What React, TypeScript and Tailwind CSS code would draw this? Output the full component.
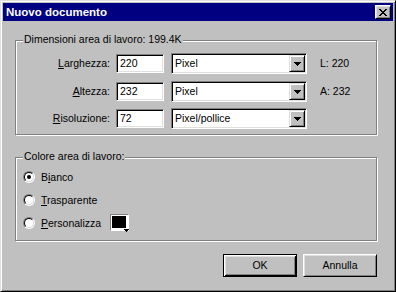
import React from 'react';

// Win98 style bevels
const sunken =
  'border border-t-[#808080] border-l-[#808080] border-b-white border-r-white shadow-[inset_1px_1px_#000,inset_-1px_-1px_#dfdfdf]';
const raised =
  'bg-[#c0c0c0] border border-t-white border-l-white border-b-black border-r-black shadow-[inset_1px_1px_#dfdfdf,inset_-1px_-1px_#808080]';
const comboBtn =
  'bg-[#c0c0c0] border border-t-[#dfdfdf] border-l-[#dfdfdf] border-b-black border-r-black shadow-[inset_1px_1px_#fff,inset_-1px_-1px_#808080]';
const etched = 'relative border border-[#808080] shadow-[inset_1px_1px_#fff,1px_1px_#fff]';

function DownArrow() {
  return (
    <svg width="7" height="4" viewBox="0 0 7 4" shapeRendering="crispEdges" fill="#000">
      <rect x="0" y="0" width="7" height="1" />
      <rect x="1" y="1" width="5" height="1" />
      <rect x="2" y="2" width="3" height="1" />
      <rect x="3" y="3" width="1" height="1" />
    </svg>
  );
}

function CloseX() {
  return (
    <svg width="8" height="7" viewBox="0 0 8 7" shapeRendering="crispEdges" fill="#000">
      <rect x="0" y="0" width="2" height="1" />
      <rect x="6" y="0" width="2" height="1" />
      <rect x="1" y="1" width="2" height="1" />
      <rect x="5" y="1" width="2" height="1" />
      <rect x="2" y="2" width="4" height="1" />
      <rect x="3" y="3" width="2" height="1" />
      <rect x="2" y="4" width="4" height="1" />
      <rect x="1" y="5" width="2" height="1" />
      <rect x="5" y="5" width="2" height="1" />
      <rect x="0" y="6" width="2" height="1" />
      <rect x="6" y="6" width="2" height="1" />
    </svg>
  );
}

const rows = [
  { hot: 'L', rest: 'arghezza:', value: '220', unit: 'Pixel', info: 'L: 220', mt: '' },
  { hot: 'A', rest: 'ltezza:', value: '232', unit: 'Pixel', info: 'A: 232', mt: 'mt-[7px]' },
  { hot: 'R', rest: 'isoluzione:', value: '72', unit: 'Pixel/pollice', info: '', mt: 'mt-[6px]' },
];

function Radio({ checked }: { checked?: boolean }) {
  return (
    <div className="self-start mt-[5px] w-[12px] h-[12px] rounded-full border border-t-[#808080] border-l-[#808080] border-b-white border-r-white">
      <div className="w-[10px] h-[10px] rounded-full border border-t-black border-l-black border-b-[#dfdfdf] border-r-[#dfdfdf] bg-white flex items-center justify-center">
        {checked && <div className="w-[4px] h-[4px] rounded-full bg-black" />}
      </div>
    </div>
  );
}

export default function App() {
  return (
    <div className="w-[396px] h-[292px] bg-[#c0c0c0] border border-t-[#dfdfdf] border-l-[#dfdfdf] border-b-black border-r-black shadow-[inset_1px_1px_#fff,inset_-1px_-1px_#808080] p-[2px] flex flex-col font-['Liberation_Sans',Arial,sans-serif] text-[10.5px] text-black leading-[13px]">
      {/* Title bar */}
      <div className="h-[18px] bg-[#000080] flex items-center justify-between pl-[3px] pr-[2px]">
        <span className="text-white font-bold text-[11.5px]">Nuovo documento</span>
        <div className={`${raised} w-[16px] h-[14px] flex items-center justify-center`}>
          <CloseX />
        </div>
      </div>

      {/* Body */}
      <div className="flex flex-col pl-[12px]">
        <div className={`${etched} mt-[19px] w-[362px] h-[95px] pt-[12px]`}>
          <span className="absolute top-[-8px] left-[7px] px-[1px] bg-[#c0c0c0]">
            Dimensioni area di lavoro: 199.4K
          </span>
          {rows.map((r) => (
            <div key={r.hot} className={`flex items-center h-[21px] ${r.mt}`}>
              <span className="w-[94px] text-right">
                <u>{r.hot}</u>
                {r.rest}
              </span>
              <div className={`${sunken} ml-[6px] w-[48px] h-[19px] bg-white flex items-center pl-[3px]`}>
                {r.value}
              </div>
              <div className={`${sunken} ml-[7px] w-[136px] h-[21px] bg-white flex items-center`}>
                <span className="flex-1 pl-[3px]">{r.unit}</span>
                <div className={`${comboBtn} mr-[1px] w-[16px] h-[17px] flex items-center justify-center`}>
                  <DownArrow />
                </div>
              </div>
              {r.info && <span className="ml-[13px]">{r.info}</span>}
            </div>
          ))}
        </div>

        <div className={`${etched} mt-[22px] w-[362px] h-[84px] pt-[8px] pl-[7px]`}>
          <span className="absolute top-[-8px] left-[7px] px-[1px] bg-[#c0c0c0]">Colore area di lavoro:</span>
          <div className="flex items-center h-[23px]">
            <Radio checked />
            <span className="ml-[6px]">
              B<u>i</u>anco
            </span>
          </div>
          <div className="flex items-center h-[23px]">
            <Radio />
            <span className="ml-[6px]">
              <u>T</u>rasparente
            </span>
          </div>
          <div className="flex items-center h-[23px]">
            <Radio />
            <span className="ml-[6px]">
              <u>P</u>ersonalizza
            </span>
            <div className="relative self-start mt-[2px] ml-[9px] w-[19px] h-[17px] border border-t-[#808080] border-l-[#808080] border-b-white border-r-white p-[1px] pr-[2px] pb-[2px] bg-white">
              <div className="w-full h-full bg-black" />
              <div className="absolute right-[-1px] bottom-[-2px]">
                <svg width="5" height="3" viewBox="0 0 5 3" shapeRendering="crispEdges" fill="#000">
                  <rect x="0" y="0" width="5" height="1" />
                  <rect x="1" y="1" width="3" height="1" />
                  <rect x="2" y="2" width="1" height="1" />
                </svg>
              </div>
            </div>
          </div>
        </div>

        <div className="mt-[13px] w-[362px] flex justify-end gap-[6px]">
          <div className="w-[74px] h-[23px] border border-black shadow-[inset_1px_1px_#fff,inset_-1px_-1px_#000,inset_2px_2px_#dfdfdf,inset_-2px_-2px_#808080] flex items-center justify-center">
            OK
          </div>
          <div className={`${raised} w-[74px] h-[23px] flex items-center justify-center`}>Annulla</div>
        </div>
      </div>
    </div>
  );
}
